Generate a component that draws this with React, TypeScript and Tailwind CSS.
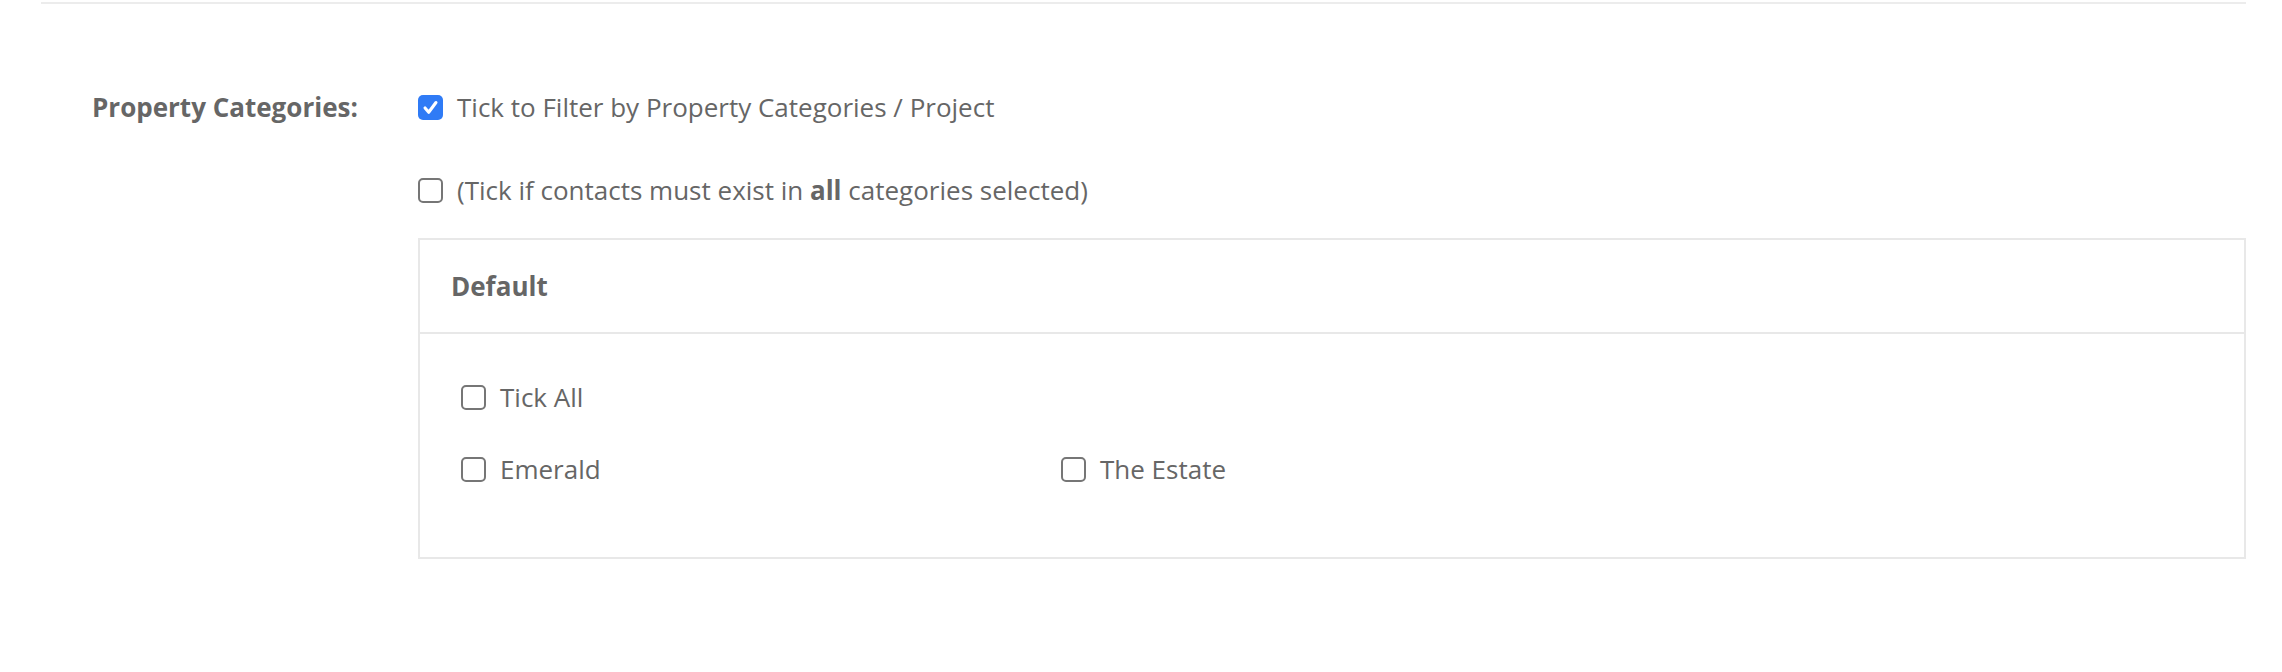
import React from 'react'

const font = { fontFamily: '"Open Sans", "Liberation Sans", sans-serif' }

function Box({ checked = false }: { checked?: boolean }) {
  if (checked) {
    return (
      <span className="flex h-[25px] w-[25px] shrink-0 items-center justify-center rounded-[5px] bg-[#2f7bf6]">
        <svg viewBox="0 0 16 16" className="h-[19px] w-[19px]" fill="none">
          <path d="M3.4 8.4 L6.5 12 L12.6 3.8" stroke="#fff" strokeWidth="2.6" strokeLinecap="round" strokeLinejoin="round" />
        </svg>
      </span>
    )
  }
  return <span className="h-[25px] w-[25px] shrink-0 rounded-[5px] border-2 border-[#767676] bg-white" />
}

function Check({ label, checked }: { label: React.ReactNode; checked?: boolean }) {
  return (
    <label className="flex h-[36px] items-center gap-[14px]">
      <Box checked={checked} />
      <span>{label}</span>
    </label>
  )
}

export default function App() {
  return (
    <div className="h-[672px] w-full bg-white text-[26px] text-[#666666]" style={font}>
      <div className="ml-[41px] mr-[36px] mt-[2px] h-[2px] bg-[#ececec]" />

      <div className="flex pt-[85px]">
        <div className="flex h-[36px] w-[418px] shrink-0 items-center pl-[92px] font-bold">
          Property Categories:
        </div>

        <div className="mr-[36px] flex-1">
          <Check checked label="Tick to Filter by Property Categories / Project" />
          <div className="mt-[47px]">
            <Check
              label={
                <>
                  (Tick if contacts must exist in <b className="font-bold">all</b> categories selected)
                </>
              }
            />
          </div>

          <div className="mt-[30px] border-2 border-[#e8e8e8]">
            <div className="flex h-[94px] items-center border-b-2 border-[#e8e8e8] pl-[31px] font-bold">
              Default
            </div>
            <div className="pb-[70px] pl-[41px] pt-[45px]">
              <Check label="Tick All" />
              <div className="mt-[36px] grid grid-cols-[600px_600px]">
                <Check label="Emerald" />
                <Check label="The Estate" />
              </div>
            </div>
          </div>
        </div>
      </div>
    </div>
  )
}
